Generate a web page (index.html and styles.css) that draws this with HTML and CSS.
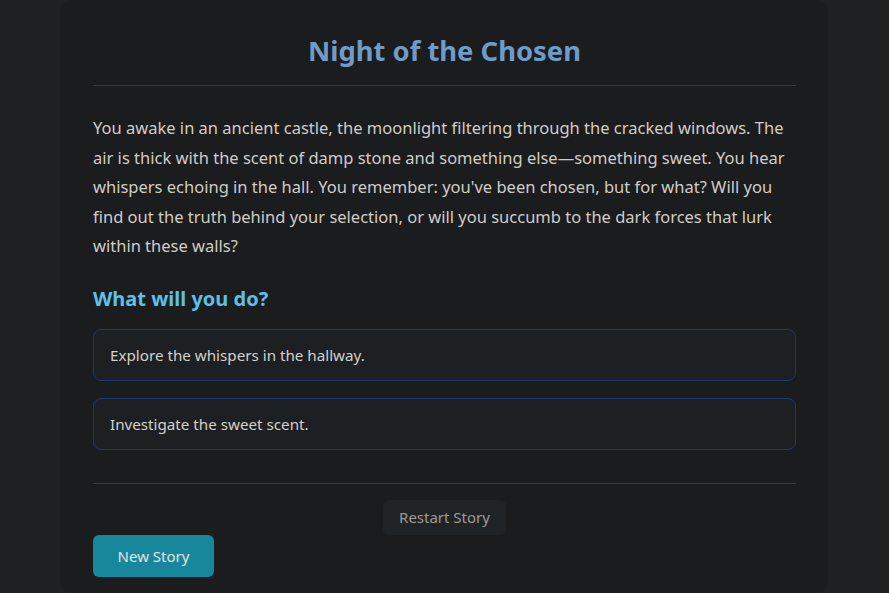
FILE: index.html
```html
<!DOCTYPE html>
<html lang="en">
<head>
<meta charset="utf-8">
<title>Night of the Chosen</title>
<link rel="stylesheet" href="styles.css">
</head>
<body>
<main class="card">
  <h1 class="title">Night of the Chosen</h1>
  <p class="story">You awake in an ancient castle, the moonlight filtering through the cracked windows. The air is thick with the scent of damp stone and something else—something sweet. You hear whispers echoing in the hall. You remember: you've been chosen, but for what? Will you find out the truth behind your selection, or will you succumb to the dark forces that lurk within these walls?</p>
  <h2 class="prompt">What will you do?</h2>
  <div class="choices">
    <button class="choice">Explore the whispers in the hallway.</button>
    <button class="choice">Investigate the sweet scent.</button>
  </div>
  <div class="controls">
    <button class="restart">Restart Story</button>
  </div>
  <button class="new-story">New Story</button>
</main>
</body>
</html>
```

FILE: styles.css
```css
* { box-sizing: border-box; }
html, body { margin: 0; padding: 0; }
body {
  background: #1e2022;
  font-family: "Noto Sans", "Open Sans", sans-serif;
  color: #cfcfcf;
}
.card {
  width: 768px;
  margin: 0 0 0 60px;
  background: #1b1c1e;
  border-radius: 12px;
  padding: 32px 32px 16px 33px;
  min-height: 593px;
}
.title {
  margin: 0;
  font-size: 27.4px;
  line-height: 38px;
  font-weight: 700;
  color: #6f9bc8;
  text-align: center;
  padding-bottom: 15px;
  border-bottom: 1px solid #3a3b3d;
}
.story {
  margin: 27px 0 0;
  font-size: 16.5px;
  line-height: 29.6px;
  color: #d0ccc6;
}
.prompt {
  margin: 24px 0 0;
  font-size: 20px;
  line-height: 28px;
  font-weight: 700;
  color: #5cc0ea;
}
.choices {
  margin-top: 16px;
  display: flex;
  flex-direction: column;
  gap: 17px;
}
.choice {
  display: block;
  width: 100%;
  height: 52px;
  text-align: left;
  padding: 0 16px;
  font-family: inherit;
  font-size: 15.2px;
  color: #d4d0ca;
  background: #1d2023;
  border: 1px solid #1a3b6c;
  border-radius: 8px;
}
.controls {
  margin-top: 33px;
  border-top: 1px solid #3a3b3d;
  padding-top: 16px;
  display: flex;
  justify-content: center;
}
.restart {
  height: 35px;
  padding: 0 16px;
  font-family: inherit;
  font-size: 15px;
  color: #9c9a96;
  background: #202326;
  border: none;
  border-radius: 6px;
}
.new-story {
  display: block;
  height: 42px;
  width: 121px;
  font-family: inherit;
  font-size: 15px;
  color: #e2e2e2;
  background: #17879c;
  border: none;
  border-radius: 6px;
}
```
